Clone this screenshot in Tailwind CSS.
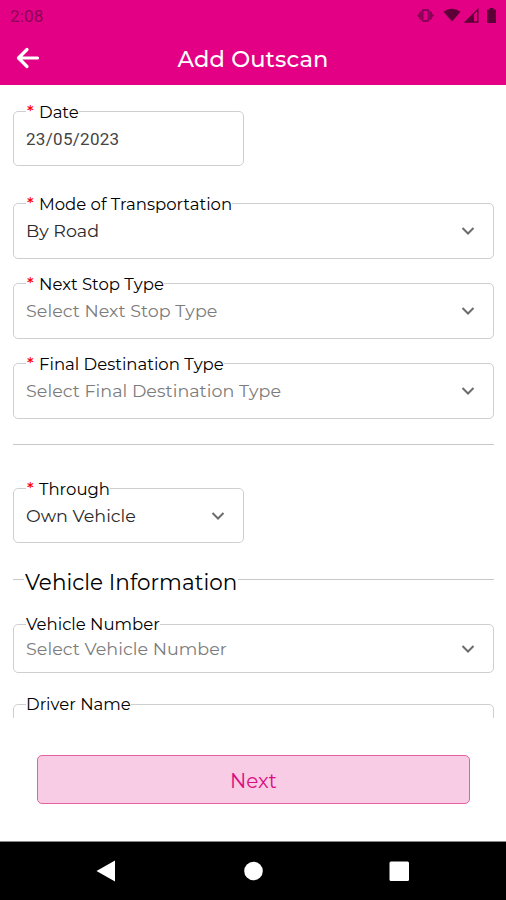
<!DOCTYPE html>
<html lang="en">
<head>
<meta charset="utf-8">
<title>Add Outscan</title>
<script src="https://cdn.jsdelivr.net/npm/@tailwindcss/browser@4"></script>
</head>
<body class="bg-white">
<div class="w-[506px] h-[900px] flex flex-col overflow-hidden bg-white text-[#2a2a2a] font-[Montserrat,Inter,sans-serif]">
  <header class="h-[85px] shrink-0 bg-[#e30084] flex flex-col">
    <div class="h-8 flex items-center justify-between pl-[10px] pr-[8px]">
      <span class="font-[Roboto,sans-serif] text-[17px] leading-8 text-[#8b0058] tracking-[0.2px]">2:08</span>
      <svg width="82" height="18" viewBox="0 0 82 18" fill="#5c0037">
        <g transform="translate(0 -.5)"><rect x="6.500" y="3.500" width="6" height="11" rx="1" fill="none" stroke="#8b0058" stroke-width="2"/><path fill="#8b0058" d="M5.500 4.500v9L3 12.500V11L.8 9 3 7V5.500zM13.500 4.500v9l2.500-1V11l2.200-2L16 7V5.500z"/></g>
        <path d="M27.500 4.800Q36-1.200 44.500 4.800L36 14.500z"/>
        <path fill-rule="evenodd" d="M47.500 15.800L62.500 1v14.800zM58 7.300v7h3V4.300z"/>
        <path d="M71.500 2.500h2V1h4v1.500h2q.5 0 .5.800v12q0 .7-.8.700h-7.400q-.8 0-.8-.7v-12q0-.8.5-.8z"/>
      </svg>
    </div>
    <div class="h-[53px] grid grid-cols-[1fr_auto_1fr] items-center">
      <svg class="ml-4 -mt-px" width="24" height="24" viewBox="0 0 24 24" fill="none" stroke="#fff" stroke-width="3.200" stroke-linecap="round" stroke-linejoin="round"><path d="M21.500 12H3M11 3.500L2.500 12l8.500 8.500"/></svg>
      <h1 class="text-[22.5px] leading-[30px] font-medium text-white tracking-[0.15px]">Add Outscan</h1>
      <span></span>
    </div>
  </header>

  <main class="h-[633px] shrink-0 overflow-hidden pl-[13px] pr-3 pt-[14px] text-[17.5px]">
    <fieldset class="w-[231px] h-[67px] border border-[#cfcfcf] rounded-[5px] px-3">
      <legend class="h-6 flex pt-[2px] leading-[22px] text-[16.5px] text-black"><span class="text-[#f00] w-[13px] -mt-px pl-px font-medium">*</span><span>Date</span></legend>
      <div class="mt-1 h-6 leading-6 font-[Roboto,sans-serif] text-[17px] tracking-[0.3px] text-[#444]">23/05/2023</div>
    </fieldset>

    <fieldset class="mt-[25px] h-[68px] border border-[#cfcfcf] rounded-[5px] pl-3 pr-[18px]">
      <legend class="h-6 flex pt-[2px] leading-[22px] text-[16.5px] text-black"><span class="text-[#f00] w-[13px] -mt-px pl-px font-medium">*</span><span>Mode of Transportation</span></legend>
      <div class="mt-1 h-6 leading-6 flex items-center justify-between"><span>By Road</span><svg width="14" height="10" viewBox="0 0 14 10" fill="none" stroke="#6c6c6c" stroke-width="2"><path d="M1.500 2L7 7.500 12.500 2"/></svg></div>
    </fieldset>

    <fieldset class="mt-3 h-[68px] border border-[#cfcfcf] rounded-[5px] pl-3 pr-[18px]">
      <legend class="h-6 flex pt-[2px] leading-[22px] text-[16.5px] text-black"><span class="text-[#f00] w-[13px] -mt-px pl-px font-medium">*</span><span>Next Stop Type</span></legend>
      <div class="mt-1 h-6 leading-6 flex items-center justify-between"><span class="text-[#7c7c7c] tracking-[0.03px]">Select Next Stop Type</span><svg width="14" height="10" viewBox="0 0 14 10" fill="none" stroke="#6c6c6c" stroke-width="2"><path d="M1.500 2L7 7.500 12.500 2"/></svg></div>
    </fieldset>

    <fieldset class="mt-3 h-[68px] border border-[#cfcfcf] rounded-[5px] pl-3 pr-[18px]">
      <legend class="h-6 flex pt-[2px] leading-[22px] text-[16.5px] text-black"><span class="text-[#f00] w-[13px] -mt-px pl-px font-medium">*</span><span>Final Destination Type</span></legend>
      <div class="mt-1 h-6 leading-6 flex items-center justify-between"><span class="text-[#7c7c7c] tracking-[0.03px]">Select Final Destination Type</span><svg width="14" height="10" viewBox="0 0 14 10" fill="none" stroke="#6c6c6c" stroke-width="2"><path d="M1.500 2L7 7.500 12.500 2"/></svg></div>
    </fieldset>

    <hr class="mt-[25px] border-[#c8c8c8]">

    <fieldset class="mt-[31px] w-[231px] h-[67px] border border-[#cfcfcf] rounded-[5px] pl-3 pr-[18px]">
      <legend class="h-6 flex pt-[2px] leading-[22px] text-[16.5px] text-black"><span class="text-[#f00] w-[13px] -mt-px pl-px font-medium">*</span><span>Through</span></legend>
      <div class="mt-1 h-6 leading-6 flex items-center justify-between"><span>Own Vehicle</span><svg width="14" height="10" viewBox="0 0 14 10" fill="none" stroke="#6c6c6c" stroke-width="2"><path d="M1.500 2L7 7.500 12.500 2"/></svg></div>
    </fieldset>

    <div class="mt-[20px] h-8 flex items-center">
      <span class="w-[11px] h-px bg-[#c8c8c8]"></span>
      <h2 class="pt-[6px] text-[21.5px] leading-7 text-black px-px tracking-[0.04px]">Vehicle Information</h2>
      <span class="flex-1 h-px bg-[#c8c8c8]"></span>
    </div>

    <fieldset class="mt-[17px] h-[61px] border border-[#cfcfcf] rounded-[5px] pl-3 pr-[18px]">
      <legend class="h-6 flex pt-px leading-[22px] text-[16.5px] text-black"><span>Vehicle Number</span></legend>
      <div class="mt-px h-6 leading-6 flex items-center justify-between"><span class="text-[#7c7c7c] tracking-[0.03px]">Select Vehicle Number</span><svg width="14" height="10" viewBox="0 0 14 10" fill="none" stroke="#6c6c6c" stroke-width="2"><path d="M1.500 2L7 7.500 12.500 2"/></svg></div>
    </fieldset>

    <fieldset class="mt-[19px] h-[62px] border border-[#cfcfcf] rounded-[5px] px-3">
      <legend class="h-6 flex pt-px leading-[22px] text-[16.5px] text-black"><span>Driver Name</span></legend>
    </fieldset>
  </main>

  <div class="h-[123px] shrink-0 px-[37px] pt-[37px]">
    <button class="block w-[433px] h-[49px] rounded-[5px] border border-[#e4609f] bg-[#f9cce6] text-[#dc0b80] text-[20px] leading-[48px] pt-px">Next</button>
  </div>

  <nav class="flex-1 bg-black border-t border-[#888]">
    <svg width="506" height="58" viewBox="0 0 506 58" fill="#fff"><path d="M96.500 29L115 18.500v21z"/><circle cx="253.500" cy="29" r="9.300"/><rect x="389.500" y="19.500" width="19.500" height="19.500" rx="1.500"/></svg>
  </nav>
</div>
</body>
</html>
